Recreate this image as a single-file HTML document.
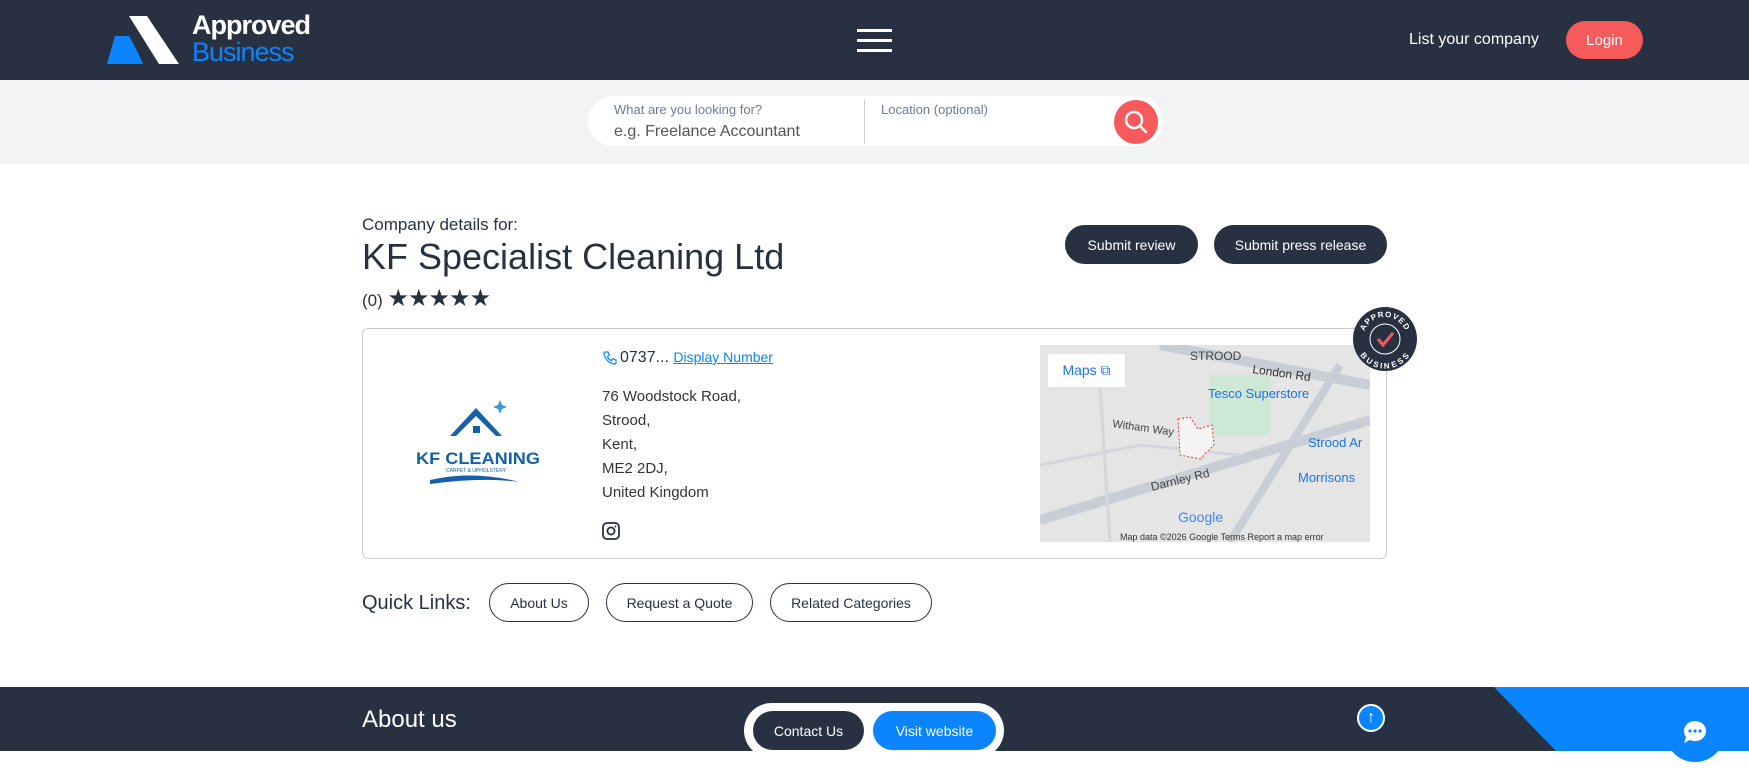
<!DOCTYPE html>
<html><head><meta charset="utf-8"><style>
*{box-sizing:border-box;margin:0;padding:0}
body{width:1749px;height:782px;overflow:hidden;background:#fff;font-family:"Liberation Sans",sans-serif;color:#283142;position:relative}
.abs{position:absolute}
.hdr{left:0;top:0;width:1749px;height:80px;background:#283142}
.band{left:0;top:80px;width:1749px;height:84px;background:#f2f3f5}
.btn{position:absolute;border-radius:20px;font-size:14px;display:flex;align-items:center;justify-content:center}
.dark{background:#283142;color:#fff}
.out{border:1px solid #283142;color:#283142;background:#fff}
.addr div{height:24px;font-size:15px;color:#333}
</style></head><body>
<div class="abs hdr"></div>
<svg class="abs" style="left:107px;top:16px" width="75" height="48" viewBox="0 0 75 48">
<polygon points="22,0 40,0 72,48 52,48" fill="#fff"/>
<path d="M8,20 L22,20 Q30,34 36,48 L0,48 Z" fill="#0a84ff"/>
</svg>
<div class="abs" style="left:192px;top:11px;color:#fff;font-size:27px;line-height:28px;letter-spacing:-1px;font-weight:bold">Approved</div>
<div class="abs" style="left:192px;top:38px;color:#0a84ff;font-size:27px;line-height:28px;letter-spacing:-1px">Business</div>
<div class="abs" style="left:857px;top:29px;width:35px;height:3px;background:#fff"></div>
<div class="abs" style="left:857px;top:39px;width:35px;height:3px;background:#fff"></div>
<div class="abs" style="left:857px;top:49px;width:35px;height:3px;background:#fff"></div>
<div class="abs" style="left:1409px;top:31px;color:#fff;font-size:16px">List your company</div>
<div class="btn" style="left:1566px;top:21px;width:77px;height:38px;background:#f65a5b;color:#fff;font-size:15px">Login</div>
<div class="abs band"></div>
<div class="abs" style="left:588px;top:96px;width:575px;height:50px;background:#fff;border-radius:25px"></div>
<div class="abs" style="left:614px;top:102px;font-size:13px;color:#6b7a99">What are you looking for?</div>
<div class="abs" style="left:614px;top:123px;font-size:16px;color:#555">e.g. Freelance Accountant</div>
<div class="abs" style="left:864px;top:100px;width:1px;height:44px;background:#ccc"></div>
<div class="abs" style="left:881px;top:102px;font-size:13px;color:#6b7a99">Location (optional)</div>
<div class="abs" style="left:1114px;top:100px;width:44px;height:44px;border-radius:50%;background:#f65a5b"></div>
<svg class="abs" style="left:1122px;top:108px" width="28" height="28" viewBox="0 0 28 28"><circle cx="12" cy="12" r="8" fill="none" stroke="#fff" stroke-width="2.5"/><line x1="18" y1="18" x2="24" y2="24" stroke="#fff" stroke-width="2.5" stroke-linecap="round"/></svg>

<div class="abs" style="left:362px;top:215px;font-size:17px">Company details for:</div>
<div class="abs" style="left:362px;top:236px;font-size:36px;font-weight:500">KF Specialist Cleaning Ltd</div>
<div class="abs" style="left:362px;top:284px;font-size:17px">(0) <span style="font-size:24px;letter-spacing:-1px">★★★★★</span></div>
<div class="btn dark" style="left:1065px;top:225px;width:133px;height:39px">Submit review</div>
<div class="btn dark" style="left:1214px;top:225px;width:173px;height:39px">Submit press release</div>

<div class="abs" style="left:362px;top:328px;width:1025px;height:231px;border:1px solid #ccc;border-radius:6px"></div>
<svg class="abs" style="left:412px;top:398px" width="132" height="92" viewBox="0 0 132 92">
<path d="M38,38 L64,10 L90,38 L84,38 L64,18 L44,38Z" fill="#1560a8"/>
<rect x="61" y="28" width="7" height="7" fill="#1560a8"/>
<path d="M88,2 l2,5 5,2 -5,2 -2,5 -2,-5 -5,-2 5,-2z" fill="#3a9ad9"/>
<text x="4" y="66" font-family="Liberation Sans" font-weight="bold" font-size="17" fill="#1560a8" textLength="124" lengthAdjust="spacingAndGlyphs">KF CLEANING</text>
<text x="34" y="74" font-family="Liberation Sans" font-size="5" fill="#1560a8">CARPET &amp; UPHOLSTERY</text>
<path d="M18,82 Q60,72 108,84 Q70,79 18,86Z" fill="#1560a8"/>
</svg>
<svg class="abs" style="left:602px;top:350px" width="16" height="16" viewBox="0 0 24 24"><path d="M5 3h4l2 5-3 2a12 12 0 0 0 6 6l2-3 5 2v4a2 2 0 0 1-2 2A18 18 0 0 1 3 5a2 2 0 0 1 2-2z" fill="none" stroke="#0a84ff" stroke-width="1.8"/></svg>
<div class="abs" style="left:620px;top:349px;font-size:16px">0737... <a style="color:#0a84ff;text-decoration:underline;font-size:14px">Display Number</a></div>
<div class="abs addr" style="left:602px;top:388px"><div>76 Woodstock Road,</div><div>Strood,</div><div>Kent,</div><div>ME2 2DJ,</div><div>United Kingdom</div></div>
<svg class="abs" style="left:602px;top:522px" width="18" height="18" viewBox="0 0 18 18"><rect x="1" y="1" width="16" height="16" rx="4" fill="none" stroke="#283142" stroke-width="1.8"/><circle cx="9" cy="9" r="3.6" fill="none" stroke="#283142" stroke-width="1.8"/><circle cx="13.5" cy="4.5" r="1" fill="#283142"/></svg>

<div class="abs" style="left:1040px;top:345px;width:330px;height:197px;background:#e5e5e5;overflow:hidden">
<svg width="330" height="197" viewBox="0 0 330 197">
<path d="M0,175 L330,75" stroke="#c9ced6" stroke-width="10" fill="none"/>
<path d="M120,0 L330,40" stroke="#c9ced6" stroke-width="10" fill="none"/>
<path d="M190,197 L300,20" stroke="#c9ced6" stroke-width="8" fill="none"/>
<path d="M0,120 L100,100 L200,110" stroke="#d3d6db" stroke-width="3" fill="none"/>
<path d="M60,40 L70,197" stroke="#d3d6db" stroke-width="3" fill="none"/>
<path d="M170,30 L230,30 L230,90 L170,90Z" fill="#cde8d4"/>
<path d="M138,74 L150,72 L158,84 L172,80 L174,100 L160,114 L140,110Z" fill="#f5f5f5" stroke="#e33" stroke-dasharray="2,2"/>
<text x="150" y="15" font-size="12" font-family="Liberation Sans" fill="#444">STROOD</text>
<text x="212" y="28" font-size="12" font-family="Liberation Sans" fill="#333" transform="rotate(8 212 28)">London Rd</text>
<text x="168" y="53" font-size="13" font-family="Liberation Sans" fill="#1a73e8">Tesco Superstore</text>
<text x="268" y="102" font-size="13" font-family="Liberation Sans" fill="#1a73e8">Strood Ar</text>
<text x="258" y="137" font-size="13" font-family="Liberation Sans" fill="#1a73e8">Morrisons</text>
<text x="72" y="82" font-size="11" font-family="Liberation Sans" fill="#444" transform="rotate(8 72 82)">Witham Way</text>
<text x="112" y="146" font-size="12" font-family="Liberation Sans" fill="#444" transform="rotate(-14 112 146)">Darnley Rd</text>
<text x="138" y="177" font-size="14" font-family="Liberation Sans" fill="#4285f4">Google</text>
<text x="80" y="195" font-size="9" font-family="Liberation Sans" fill="#333">Map data ©2026 Google   Terms   Report a map error</text>
</svg>
<div class="abs" style="left:8px;top:9px;width:77px;height:33px;background:#fff;color:#1a73e8;font-size:14px;display:flex;align-items:center;justify-content:center">Maps ⧉</div>
</div>
<svg class="abs" style="left:1353px;top:307px" width="64" height="64" viewBox="0 0 64 64">
<defs><path id="ta" d="M10,32 A22,22 0 0 1 54,32"/><path id="tb" d="M8,32 A24,24 0 0 0 56,32"/></defs>
<circle cx="32" cy="32" r="32" fill="#283142"/>
<circle cx="32" cy="32" r="15" fill="none" stroke="#fff" stroke-width="1"/>
<path d="M25,32 L30,38 L40,26" fill="none" stroke="#f65a5b" stroke-width="3"/>
<text font-size="8" font-family="Liberation Sans" font-weight="bold" fill="#fff" letter-spacing="1"><textPath href="#ta" startOffset="50%" text-anchor="middle">APPROVED</textPath></text>
<text font-size="8" font-family="Liberation Sans" font-weight="bold" fill="#fff" letter-spacing="1"><textPath href="#tb" startOffset="50%" text-anchor="middle" dominant-baseline="hanging">BUSINESS</textPath></text>
</svg>

<div class="abs" style="left:362px;top:592px;font-size:20px;font-weight:500">Quick Links:</div>
<div class="btn out" style="left:489px;top:583px;width:100px;height:39px">About Us</div>
<div class="btn out" style="left:606px;top:583px;width:147px;height:39px">Request a Quote</div>
<div class="btn out" style="left:770px;top:583px;width:162px;height:39px">Related Categories</div>

<div class="abs" style="left:0;top:687px;width:1749px;height:64px;background:#283142"></div>
<svg class="abs" style="left:1494px;top:687px" width="255" height="64"><polygon points="0,0 255,0 255,64 62,64" fill="#0a84ff"/></svg>
<div class="abs" style="left:362px;top:706px;font-size:24px;color:#fff;font-weight:500">About us</div>
<div class="abs" style="left:1357px;top:704px;width:28px;height:28px;border-radius:50%;background:#0a84ff;border:2px solid #fff;color:#fff;font-size:16px;text-align:center;line-height:23px">↑</div>
<div class="abs" style="left:744px;top:703px;width:260px;height:55px;border-radius:28px;background:#fff"></div>
<div class="btn dark" style="left:753px;top:711px;width:111px;height:39px">Contact Us</div>
<div class="btn" style="left:873px;top:711px;width:123px;height:39px;background:#0a84ff;color:#fff">Visit website</div>
<div class="abs" style="left:1665px;top:702px;width:60px;height:60px;border-radius:50%;background:#0a84ff"></div>
<svg class="abs" style="left:1680px;top:717px" width="30" height="30" viewBox="0 0 30 30"><path d="M4 14a11 10 0 0 1 22 0a11 10 0 0 1-16 9l-6 3 2-6A10 10 0 0 1 4 14z" fill="#fff"/><circle cx="10" cy="14" r="1.6" fill="#0a84ff"/><circle cx="15" cy="14" r="1.6" fill="#0a84ff"/><circle cx="20" cy="14" r="1.6" fill="#0a84ff"/></svg>
</body></html>
